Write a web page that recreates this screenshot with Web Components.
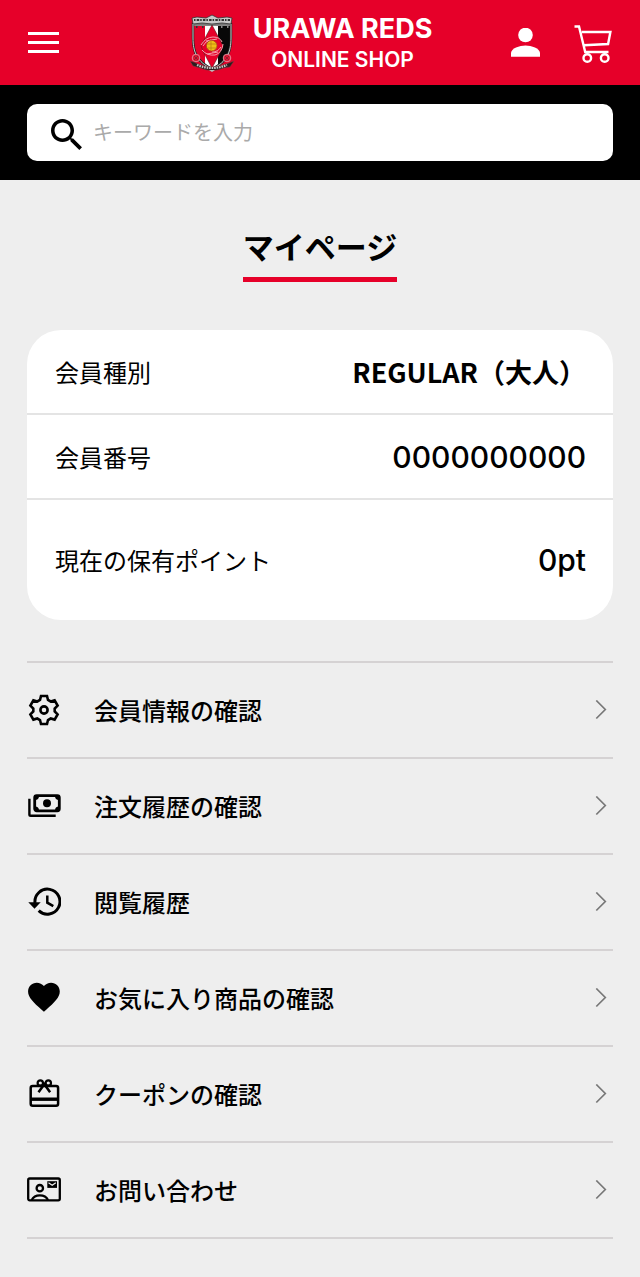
<!DOCTYPE html>
<html lang="ja">
<head>
<meta charset="utf-8">
<meta name="viewport" content="width=device-width, initial-scale=1">
<title>マイページ | URAWA REDS ONLINE SHOP</title>
<style>
  :root {
    --red: #e60029;
    --gutter: 27px;
    --line: #d5d2d3;
  }
  body {
    margin: 0;
    background: #eee;
    color: #000;
    font-family: "Noto Sans CJK JP", "Noto Sans", sans-serif;
    font-size: 24px;
    line-height: 36px;
  }
  main {
    padding: 44px var(--gutter) 38px;
  }
</style>
</head>
<body>
  <shop-header></shop-header>
  <shop-search placeholder="キーワードを入力"></shop-search>
  <main>
    <page-title>マイページ</page-title>
    <member-card>
      <member-row label="会員種別">REGULAR（大人）</member-row>
      <member-row label="会員番号" numeric>0000000000</member-row>
      <member-row label="現在の保有ポイント" numeric large>0pt</member-row>
    </member-card>
    <menu-list>
      <menu-item icon="settings" href="#profile">会員情報の確認</menu-item>
      <menu-item icon="payments" href="#orders">注文履歴の確認</menu-item>
      <menu-item icon="history" href="#history">閲覧履歴</menu-item>
      <menu-item icon="heart" href="#favorites">お気に入り商品の確認</menu-item>
      <menu-item icon="gift" href="#coupons">クーポンの確認</menu-item>
      <menu-item icon="contact" href="#contact">お問い合わせ</menu-item>
    </menu-list>
  </main>

<script>
const ICONS = {
  menu: `<svg viewBox="0 0 31 21" width="31" height="21"><path d="M0 0h31v3H0zM0 9h31v3H0zM0 18h31v3H0z" fill="currentColor"/></svg>`,

  person: `<svg viewBox="0 0 29 30" width="29" height="30" fill="currentColor">
    <circle cx="14.5" cy="7" r="7.300"/>
    <path d="M0 28.800v-3.800c0-4.800 8.600-7.600 14.500-7.600S29 20.200 29 25v3.800z"/></svg>`,

  cart: `<svg viewBox="0 0 38 40" width="38" height="40" fill="none" stroke="currentColor" stroke-width="2.400">
    <path d="M.5 3.500h4.500L11.200 29H34.500M7.800 9h28.600l-2.300 12-24.300 1.200"/>
    <circle cx="13.300" cy="35" r="3.800"/><circle cx="30.700" cy="35" r="3.800"/></svg>`,

  search: `<svg viewBox="3 3 17.500 17.500" width="31" height="31"><path fill="currentColor" d="M15.500 14h-.79l-.28-.27C15.410 12.590 16 11.110 16 9.500 16 5.910 13.090 3 9.500 3S3 5.910 3 9.500 5.910 16 9.500 16c1.610 0 3.090-.59 4.230-1.570l.27.28v.79l5 4.990L20.490 19l-4.990-5zm-6 0C7.010 14 5 11.990 5 9.500S7.010 5 9.500 5 14 7.010 14 9.500 11.990 14 9.500 14z"/></svg>`,

  settings: `<svg viewBox="-17 -17 34 34" fill="none" stroke="currentColor" stroke-width="2.600" stroke-linejoin="miter">
    <polygon points="-4,-10 -3,-14 3,-14 4,-10 6.700,-8.500 10.600,-9.600 13.600,-4.400 10.700,-1.500 10.700,1.500 13.600,4.400 10.600,9.600 6.700,8.500 4,10 3,14 -3,14 -4,10 -6.700,8.500 -10.600,9.600 -13.600,4.400 -10.700,1.500 -10.700,-1.500 -13.600,-4.400 -10.600,-9.600 -6.700,-8.500"/>
    <circle r="3.600"/></svg>`,

  payments: `<svg viewBox="0 0 34 34" fill="none" stroke="currentColor" stroke-width="2.800">
    <rect x="7.700" y="6.600" width="24.600" height="15.200" rx="2"/>
    <path d="M2.400 9.800V25.500q0 1.300 1.300 1.300h25" stroke-width="2.400"/>
    <circle cx="20" cy="14.200" r="4" fill="currentColor" stroke="none"/>
    <path d="M8 11V7h4q0 4-4 4M32 11V7h-4q0 4 4 4M8 17.500v4h4q0-4-4-4M32 17.500v4h-4q0-4 4-4" fill="currentColor" stroke="none"/></svg>`,

  history: `<svg viewBox="0 0 34 34" fill="none" stroke="currentColor" stroke-width="3">
    <path d="M8 18a12.500 12.500 0 1 1 3.700 7.600"/>
    <path d="M20.300 10.500v7.200l6 3.500" stroke-width="2.500"/>
    <path d="M1.300 17.300h12.400l-6.200 6.400z" fill="currentColor" stroke="none"/></svg>`,

  heart: `<svg viewBox="0 0 34 34"><path transform="translate(-2.100 -3) scale(1.585)" fill="currentColor" d="M12 21.350l-1.450-1.320C5.400 15.360 2 12.280 2 8.500 2 5.420 4.420 3 7.500 3c1.740 0 3.410.81 4.500 2.090C13.090 3.810 14.760 3 16.500 3 19.580 3 22 5.420 22 8.500c0 3.780-3.400 6.860-8.550 11.540L12 21.350z"/></svg>`,

  gift: `<svg viewBox="0 0 34 34" fill="none" stroke="currentColor" stroke-width="2.500">
    <rect x="3.700" y="9" width="27.400" height="19.800" rx="2"/>
    <path d="M3 22.200h29" stroke-width="3.400"/>
    <circle cx="13.300" cy="6" r="2.700" stroke-width="2.200"/><circle cx="21.300" cy="6" r="2.700" stroke-width="2.200"/>
    <path d="M11.500 15.200l5.800-8 5.800 8M15 8h4.600"/></svg>`,

  contact: `<svg viewBox="0 0 34 34" fill="none" stroke="currentColor" stroke-width="2.300">
    <rect x="1.200" y="5.500" width="31.600" height="21.800" rx="1.500"/>
    <circle cx="12.800" cy="15.200" r="3.200"/>
    <path d="M4.700 27c1.500-3 4.500-4.700 8.100-4.700s6.800 1.700 8.200 4.700"/>
    <path d="M20.300 8.200H30v6.700h-9.700z" fill="currentColor" stroke="none"/>
    <path d="M21.500 9.700l3.700 2.500 3.600-2.500" stroke="#eee" stroke-width="1.200"/></svg>`,

  chevron: `<svg viewBox="0 0 12 20" width="12" height="20" fill="none" stroke="#777" stroke-width="1.700"><path d="M1.300 .5l9 9-9 9"/></svg>`,

  crest: `<svg viewBox="0 0 46 60" width="46" height="60">
    <defs><clipPath id="shield"><path d="M4 11h38v14c0 14-4 24-19 31C8 49 4 39 4 25z"/></clipPath></defs>
    <g clip-path="url(#shield)">
      <path d="M0 10h46v48H0z" fill="#e60029"/>
      <path d="M16 10h13v48H16z" fill="#fff"/>
      <path d="M29 10h14v48H29z" fill="#080808"/>
      <path d="M4 10h38v3H4z" fill="#aaa"/>
    </g>
    <path d="M23 12l8 15 3 6-3 7-8 15-8-15-3-7 3-6z" fill="#e60029" stroke="#522" stroke-width=".6"/>
    <path d="M4 11h38v14c0 14-4 24-19 31C8 49 4 39 4 25z" fill="none" stroke="#222" stroke-width="2.400"/>
    <path d="M4 11h38v14c0 14-4 24-19 31C8 49 4 39 4 25z" fill="none" stroke="#ccc" stroke-width="1"/>
    <path d="M3 5l5-1 9 1 6-3 6 3 9-1 5 1-1 6-9-1-10 1-10-1-9 1z" fill="#c8c8c8" stroke="#333" stroke-width=".8"/>
    <path d="M5 7h36" stroke="#333" stroke-width="2" stroke-dasharray="1.500 1.200 2.500 1"/>
    <path d="M7 14h1.500M13 14h1.500" stroke="#333" stroke-width="2"/>
    <path d="M32 14h1.500M38 14h1.500" stroke="#888" stroke-width="2"/>
    <g fill="none" stroke="#f5a0ac" stroke-width="1">
      <path d="M12 32q5-8 12-8 7 0 9 5M34 31q-1 9-8 11-8 1-13-5"/>
      <path d="M14 33q2-5 8-6M32 34q-3 5-9 5M17 28l11-2M18 41l11-2"/>
    </g>
    <circle cx="22.700" cy="32.700" r="5.300" fill="#efbd16" stroke="#a54b16" stroke-width=".8"/>
    <path d="M18 31h9M19 35h8M22 28v9" stroke="#b57812" stroke-width=".7"/>
    <circle cx="7" cy="45" r="3.800" fill="#db1735" stroke="#e7a5ad" stroke-width=".8"/>
    <circle cx="38" cy="45" r="3.800" fill="#db1735" stroke="#e7a5ad" stroke-width=".8"/>
    <path d="M5 43l4 4m0-4l-4 4m31-4l4 4m0-4l-4 4" stroke="#80202c" stroke-width=".8"/>
    <path d="M1 48q5 1 8 3 14 6 28 0l8-3-4 6-6 1q-12 5-24 0l-7-2z" fill="#2a1d1f" stroke="#92333d" stroke-width=".6"/>
    <path d="M8 52q15 6 30 0" fill="none" stroke="#c9c9c9" stroke-width="2.200" stroke-dasharray="1.600 .9"/>
    <path d="M20 57h6l-3 2z" fill="#bbb"/></svg>`
};

class ShopHeader extends HTMLElement {
  constructor() {
    super();
    this.attachShadow({ mode: "open" });
    this.shadowRoot.innerHTML = `
      <style>
        :host { display: block; background: var(--red); color: #fff; }
        header {
          display: grid;
          grid-template-columns: 1fr auto 1fr;
          align-items: center;
          min-height: 85px;
          padding: 0 28px;
          box-sizing: border-box;
        }
        svg { display: block; }
        a { color: inherit; text-decoration: none; }
        button {
          justify-self: start;
          padding: 0;
          border: 0;
          background: none;
          color: inherit;
          cursor: pointer;
        }
        .logo {
          display: flex;
          align-items: center;
          gap: 18px;
          padding-right: 19px;
        }
        .name {
          display: grid;
          justify-items: center;
          padding-top: 3px;
          font-family: Inter, "Liberation Sans", sans-serif;
          font-weight: 600;
          font-size: 21px;
          line-height: 31px;
          white-space: nowrap;
        }
        .team { font-size: 27px; font-weight: 700; }
        .actions {
          display: flex;
          align-items: center;
          justify-content: flex-end;
          gap: 34px;
        }
      </style>
      <header>
        <button type="button" aria-label="メニュー">${ICONS.menu}</button>
        <a class="logo" href="#top">
          ${ICONS.crest}
          <span class="name"><span class="team">URAWA REDS</span><span>ONLINE SHOP</span></span>
        </a>
        <nav class="actions">
          <a href="#mypage" aria-label="マイページ">${ICONS.person}</a>
          <a href="#cart" aria-label="カート">${ICONS.cart}</a>
        </nav>
      </header>
    `;
  }
}

class ShopSearch extends HTMLElement {
  constructor() {
    super();
    this.attachShadow({ mode: "open" });
    this.shadowRoot.innerHTML = `
      <style>
        :host { display: block; padding: 19px var(--gutter); background: #000; }
        form {
          display: flex;
          align-items: center;
          gap: 11px;
          padding: 0 24px;
          border-radius: 10px;
          background: #fff;
          color: #000;
        }
        label { padding-top: 4px; }
        svg { display: block; }
        input {
          flex: 1;
          min-width: 0;
          height: 57px;
          box-sizing: border-box;
          padding: 0 0 2px;
          border: 0;
          outline: 0;
          background: none;
          font: inherit;
          font-size: 20px;
        }
        input::placeholder { color: #aaa; opacity: 1; }
      </style>
      <form role="search">
        <label for="keyword" aria-label="検索">${ICONS.search}</label>
        <input id="keyword" type="text" />
      </form>
    `;
  }

  connectedCallback() {
    const input = this.shadowRoot.querySelector("#keyword");
    input.placeholder = this.getAttribute("placeholder") || "";
    this.shadowRoot.querySelector("form").addEventListener("submit", (e) => {
      e.preventDefault();
    });
  }
}

class PageTitle extends HTMLElement {
  constructor() {
    super();
    this.attachShadow({ mode: "open" });
    this.shadowRoot.innerHTML = `
      <style>
        :host { display: flex; justify-content: center; }
        h1 {
          margin: 0;
          padding-bottom: 9px;
          border-bottom: 5px solid var(--red);
          font-size: 31px;
          font-weight: 700;
          line-height: 44px;
        }
      </style>
      <h1><slot></slot></h1>
    `;
  }
}

class MemberCard extends HTMLElement {
  constructor() {
    super();
    this.attachShadow({ mode: "open" });
    this.shadowRoot.innerHTML = `
      <style>
        :host {
          display: block;
          margin-top: 48px;
          border-radius: 34px;
          background: #fff;
        }
        ::slotted(:not(:last-child)) { border-bottom: 2px solid #e4e4e4; }
      </style>
      <slot></slot>
    `;
  }
}

class MemberRow extends HTMLElement {
  constructor() {
    super();
    this.attachShadow({ mode: "open" });
    this.shadowRoot.innerHTML = `
      <style>
        :host { display: block; padding: 24px 27px 23px 28px; }
        :host([large]) { padding-top: 42px; padding-bottom: 42px; }
        dl {
          display: flex;
          align-items: center;
          justify-content: space-between;
          gap: 16px;
          margin: 0;
        }
        dd { margin: 0; font-size: 27px; font-weight: 700; }
        :host([numeric]) dd {
          font-family: Inter, "Noto Sans CJK JP", sans-serif;
          font-size: 30px;
          font-weight: 500;
        }
      </style>
      <dl><dt></dt><dd><slot></slot></dd></dl>
    `;
  }

  connectedCallback() {
    this.shadowRoot.querySelector("dt").textContent = this.getAttribute("label");
  }
}

class MenuList extends HTMLElement {
  constructor() {
    super();
    this.attachShadow({ mode: "open" });
    this.shadowRoot.innerHTML = `
      <style>
        :host { display: block; margin-top: 41px; border-top: 2px solid var(--line); }
      </style>
      <nav aria-label="マイページメニュー"><slot></slot></nav>
    `;
  }
}

class MenuItem extends HTMLElement {
  constructor() {
    super();
    this.attachShadow({ mode: "open" });
    this.shadowRoot.innerHTML = `
      <style>
        :host { display: block; border-bottom: 2px solid var(--line); }
        a {
          display: flex;
          align-items: center;
          gap: 33px;
          padding: 29px 6px 29px 0;
          color: inherit;
          font-weight: 500;
          text-decoration: none;
        }
        svg { display: block; }
        .icon { flex: none; width: 34px; height: 34px; }
        .text { flex: 1; }
      </style>
      <a>
        <span class="icon"></span>
        <span class="text"><slot></slot></span>
        ${ICONS.chevron}
      </a>
    `;
  }

  connectedCallback() {
    this.shadowRoot.querySelector("a").href = this.getAttribute("href");
    this.shadowRoot.querySelector(".icon").innerHTML = ICONS[this.getAttribute("icon")];
  }
}

customElements.define("shop-header", ShopHeader);
customElements.define("shop-search", ShopSearch);
customElements.define("page-title", PageTitle);
customElements.define("member-card", MemberCard);
customElements.define("member-row", MemberRow);
customElements.define("menu-list", MenuList);
customElements.define("menu-item", MenuItem);
</script>
</body>
</html>
